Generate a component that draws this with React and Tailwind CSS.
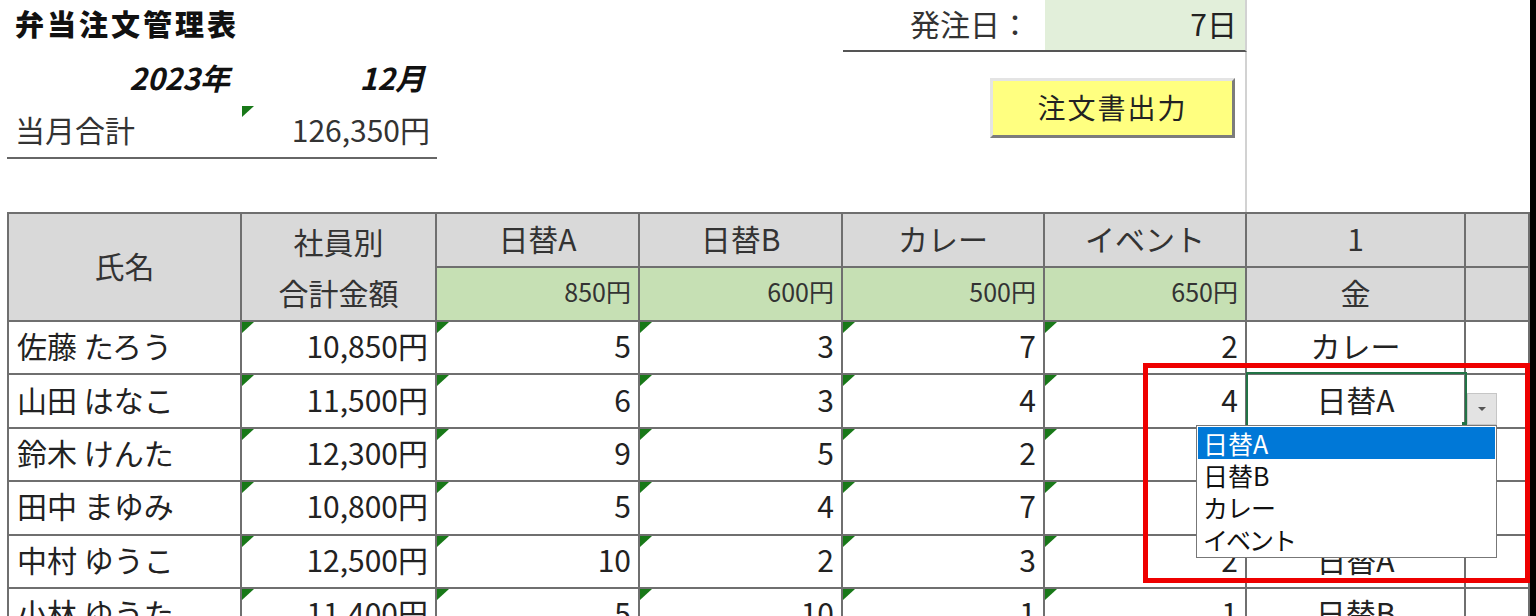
import React from "react";

const rows = [
  ["佐藤 たろう", "10,850円", 5, 3, 7, 2, "カレー"],
  ["山田 はなこ", "11,500円", 6, 3, 4, 4, "日替A"],
  ["鈴木 けんた", "12,300円", 9, 5, 2, 2, "日替B"],
  ["田中 まゆみ", "10,800円", 5, 4, 7, 1, "カレー"],
  ["中村 ゆうこ", "12,500円", 10, 2, 3, 2, "日替A"],
  ["小林 ゆうた", "11,400円", 5, 10, 1, 1, "日替B"],
];

const meals = [
  ["日替A", "850円"],
  ["日替B", "600円"],
  ["カレー", "500円"],
  ["イベント", "650円"],
];

const cell = "border-r-2 border-b-2 border-[#6f6f6f] pb-[4px]";

function Tri() {
  return (
    <svg className="absolute left-0 top-0" width="12" height="11" viewBox="0 0 12 11">
      <polygon points="0,0 12,0 0,11" fill="#187818" />
    </svg>
  );
}

export default function App() {
  return (
    <div className="relative flex h-[616px] w-[1536px] overflow-hidden bg-white text-[#222] font-['Noto_Sans_CJK_JP',sans-serif]">
      <div className="w-[1530px] pl-[7px]">

        {/* top area */}
        <div className="grid grid-cols-[235px_195px_203px_203px_202px_202px_219px_64px] grid-rows-[52px_54px_53px_53px]">
          <div className="col-start-1 col-span-3 row-start-1 flex items-center pl-2 pb-[4px] text-[29px] font-black tracking-[3px] text-[#111]">弁当注文管理表</div>

          <div className="col-start-5 row-start-1 flex items-center justify-end pr-[15px] pb-[4px] border-b-2 border-[#555] text-[30px] text-[#333]">発注日：</div>
          <div className="col-start-6 row-start-1 flex items-center justify-end pr-[8px] pb-[4px] bg-[#e2efda] border-b-2 border-b-[#555] border-r-2 border-r-[#d2d2d2] text-[30px]">7日</div>
          <div className="col-start-6 row-start-2 row-span-3 border-r-2 border-r-[#d2d2d2]" />

          <div className="col-start-1 row-start-2 flex items-center justify-end pr-[12px] pb-[4px] text-[30px] font-bold italic text-[#111]">2023年</div>
          <div className="col-start-2 row-start-2 flex items-center justify-end pr-[12px] pb-[4px] text-[30px] font-bold italic text-[#111]">12月</div>

          <div className="col-start-1 row-start-3 flex items-center pl-2 pb-[4px] border-b-2 border-[#666] text-[30px] text-[#333]">当月合計</div>
          <div className="relative col-start-2 row-start-3 flex items-center justify-end pr-[7px] pb-[4px] border-b-2 border-[#666] text-[30px] text-[#333]">
            <Tri />
            126,350円
          </div>

          <div className="col-start-5 col-span-2 row-start-2 row-span-2 flex items-start justify-end pt-[26px] pr-[12px]">
            <button className="flex h-[60px] w-[245px] items-center justify-center pb-[2px] border-[3px] border-t-[#e4e4e4] border-l-[#e4e4e4] border-r-[#7c7c7c] border-b-[#7c7c7c] bg-[#ffff80] text-[28px] tracking-[2px] text-[#222]">
              注文書出力
            </button>
          </div>
        </div>

        {/* table */}
        <div className="grid grid-cols-[233px_195px_203px_203px_202px_202px_219px_64px] grid-rows-[54px_54px] auto-rows-[53.4px] border-t-2 border-l-2 border-[#6f6f6f] text-[30px]">
          <div className={`${cell} row-span-2 flex items-center justify-center bg-[#d9d9d9] text-[#333]`}>氏名</div>
          <div className={`${cell} row-span-2 flex flex-col bg-[#d9d9d9] text-[#333]`}>
            <div className="flex h-[54px] items-center justify-center">社員別</div>
            <div className="flex flex-1 items-center justify-center">合計金額</div>
          </div>
          {meals.map(([n]) => (
            <div key={n} className={`${cell} flex items-center justify-center bg-[#d9d9d9] text-[#333]`}>{n}</div>
          ))}
          <div className={`${cell} flex items-center justify-center bg-[#d9d9d9] text-[#333]`}>1</div>
          <div className={`${cell} bg-[#d9d9d9]`} />
          {meals.map(([n, p]) => (
            <div key={p} className={`${cell} flex items-center justify-end pr-[7px] bg-[#c6e0b4] text-[25px] text-[#333]`}>{p}</div>
          ))}
          <div className={`${cell} flex items-center justify-center bg-[#d9d9d9] text-[#333]`}>金</div>
          <div className={`${cell} bg-[#d9d9d9]`} />

          {rows.map((r) => (
            <React.Fragment key={r[0]}>
              <div className={`${cell} flex items-center pl-2`}>{r[0]}</div>
              {r.slice(1, 6).map((v, i) => (
                <div key={i} className={`${cell} relative flex items-center justify-end pr-[7px]`}>
                  <Tri />
                  {v}
                </div>
              ))}
              <div className={`${cell} flex items-center justify-center`}>{r[6]}</div>
              <div className={cell} />
            </React.Fragment>
          ))}
        </div>
      </div>

      <div className="w-[6px] bg-black" />

      {/* selected cell */}
      <div className="absolute left-[1246px] top-[372px] h-[55px] w-[221px] border-2 border-[#217346]" />
      <div className="absolute left-[1462px] top-[422px] h-[6px] w-[6px] bg-[#217346]" />

      {/* dropdown arrow */}
      <div className="absolute left-[1467px] top-[393px] flex h-[32px] w-[30px] items-center justify-center border border-[#c6c6c6] bg-[#e3e3e3]">
        <svg width="10" height="6" viewBox="0 0 10 6">
          <path d="M1 1 L9 1 L5 5 Z" fill="#555" />
        </svg>
      </div>

      {/* dropdown list */}
      <div className="absolute left-[1196px] top-[425px] h-[133px] w-[301px] border border-[#777] bg-white p-[1px] text-[25px] leading-[32px] text-[#111]">
        <div className="h-[32px] bg-[#0078d7] pl-[5px] text-white">日替A</div>
        <div className="h-[32px] pl-[5px]">日替B</div>
        <div className="h-[32px] pl-[5px] tracking-[-1px]">カレー</div>
        <div className="h-[32px] pl-[5px] tracking-[-2px]">イベント</div>
      </div>

      {/* red highlight */}
      <div className="absolute left-[1143px] top-[363px] h-[220px] w-[387px] border-[5px] border-[#ee0000]" />
    </div>
  );
}
